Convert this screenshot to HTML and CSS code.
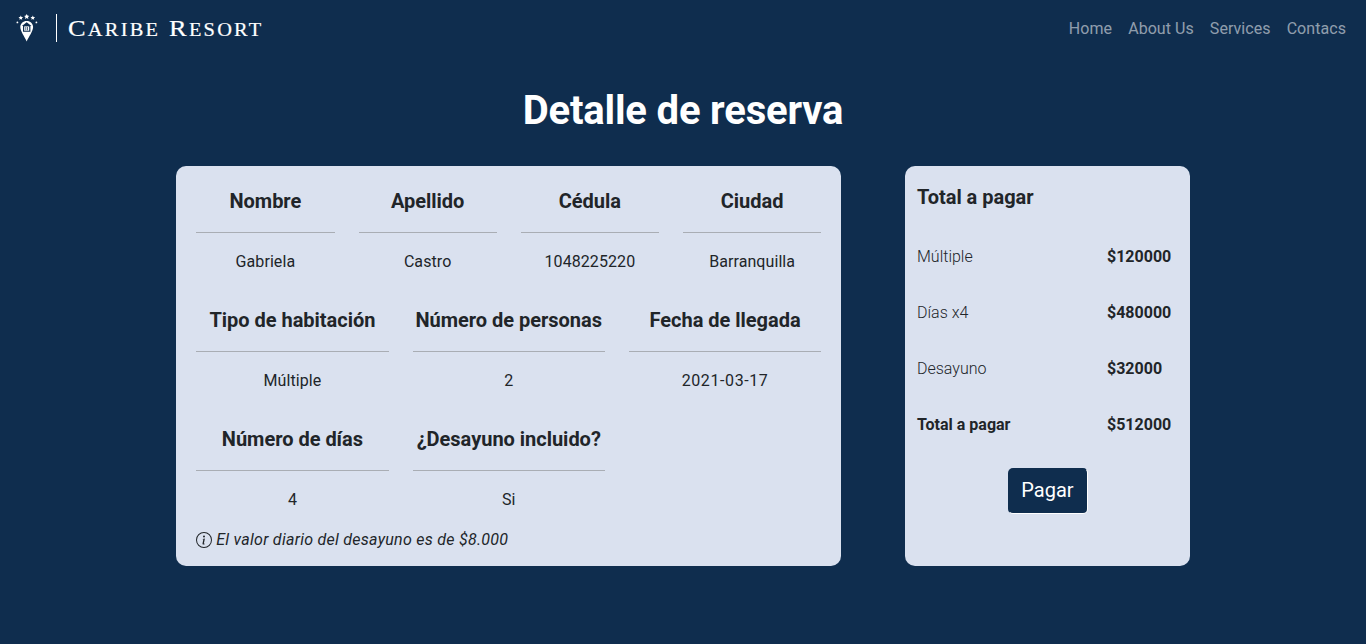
FILE: index.html
```html
<!DOCTYPE html>
<html lang="es">

<head>
    <meta charset="UTF-8">
    <meta name="viewport" content="width=device-width, initial-scale=1.0">
    <title>Detalle de reserva - Caribe Resort</title>
    <link rel="stylesheet" href="styles.css">
</head>

<body>
    <nav class="navbar">
        <a class="brand" href="#">
            <svg class="brand-icon" width="22" height="28" viewBox="0 0 22 28">
                <!-- stars -->
                <path d="M10.700 0l.8 1.600 1.800.3-1.300 1.200.3 1.800-1.600-.8-1.600.8.3-1.800-1.300-1.200 1.800-.3z" fill="#fff"/>
                <path d="M4.800 1.500l.7 1.400 1.600.2-1.200 1.100.3 1.600-1.400-.7-1.400.7.3-1.600-1.200-1.100 1.600-.2z" fill="#fff"/>
                <path d="M16.800 1.500l.7 1.400 1.600.2-1.200 1.100.3 1.600-1.400-.7-1.400.7.3-1.600-1.200-1.100 1.600-.2z" fill="#fff"/>
                <circle cx="1.400" cy="8.400" r="0.900" fill="#fff"/>
                <circle cx="20.400" cy="8.400" r="0.900" fill="#fff"/>
                <!-- pin with house -->
                <path d="M10.700 7c-3.700 0-6.400 2.700-6.400 6.100 0 4.200 4.200 9.500 6.400 14.400 2.200-4.900 6.400-10.200 6.400-14.400 0-3.400-2.700-6.100-6.400-6.100z" fill="#fff"/>
                <path d="M10.700 8.300l-4.800 3.700h1.100v5.800h7.400v-5.800h1.100z" fill="#0f2d4e"/>
                <path d="M8.200 12.400h5v4.300h-5z" fill="#fff"/>
                <path d="M9.500 13h.7v3.300h-.7zM11.200 13h.7v3.300h-.7z" fill="#0f2d4e"/>
            </svg>
            <span class="brand-name">
                <span class="brand-text">C<span class="brand-small">aribe</span> R<span class="brand-small">esort</span></span>
            </span>
        </a>
        <ul class="nav-links">
            <li><a href="#">Home</a></li>
            <li><a href="#">About Us</a></li>
            <li><a href="#">Services</a></li>
            <li><a href="#">Contacs</a></li>
        </ul>
    </nav>

    <h1 class="page-title">Detalle de reserva</h1>

    <main class="content">
        <section class="card details">
            <div class="fields fields-4">
                <div class="field">
                    <h5>Nombre</h5>
                    <hr>
                    <p>Gabriela</p>
                </div>
                <div class="field">
                    <h5>Apellido</h5>
                    <hr>
                    <p>Castro</p>
                </div>
                <div class="field">
                    <h5>Cédula</h5>
                    <hr>
                    <p>1048225220</p>
                </div>
                <div class="field">
                    <h5>Ciudad</h5>
                    <hr>
                    <p>Barranquilla</p>
                </div>
            </div>
            <div class="fields fields-3">
                <div class="field">
                    <h5>Tipo de habitación</h5>
                    <hr>
                    <p>Múltiple</p>
                </div>
                <div class="field">
                    <h5>Número de personas</h5>
                    <hr>
                    <p>2</p>
                </div>
                <div class="field">
                    <h5>Fecha de llegada</h5>
                    <hr>
                    <p class="date">2021-03-17</p>
                </div>
            </div>
            <div class="fields fields-3">
                <div class="field">
                    <h5>Número de días</h5>
                    <hr>
                    <p>4</p>
                </div>
                <div class="field">
                    <h5>¿Desayuno incluido?</h5>
                    <hr>
                    <p>Si</p>
                </div>
            </div>
            <p class="note">
                <svg width="16" height="16" viewBox="0 0 16 16" fill="currentColor">
                    <path d="M8 15A7 7 0 1 1 8 1a7 7 0 0 1 0 14zm0 1A8 8 0 1 0 8 0a8 8 0 0 0 0 16z"/>
                    <path d="M8.930 6.588l-2.290.287-.082.380.450.083c.294.070.352.176.288.469l-.738 3.468c-.194.897.105 1.319.808 1.319.545 0 1.178-.252 1.465-.598l.088-.416c-.200.176-.492.246-.686.246-.275 0-.375-.193-.304-.533L8.930 6.588zM9 4.500a1 1 0 1 1-2 0 1 1 0 0 1 2 0z"/>
                </svg>
                <em>El valor diario del desayuno es de $8.000</em>
            </p>
        </section>

        <aside class="card summary">
            <h5>Total a pagar</h5>
            <div class="summary-row">
                <span>Múltiple</span>
                <strong>$120000</strong>
            </div>
            <div class="summary-row">
                <span>Días x4</span>
                <strong>$480000</strong>
            </div>
            <div class="summary-row">
                <span>Desayuno</span>
                <strong>$32000</strong>
            </div>
            <div class="summary-row summary-total">
                <span>Total a pagar</span>
                <strong>$512000</strong>
            </div>
            <div class="summary-action">
                <button type="button" class="pay-btn">Pagar</button>
            </div>
        </aside>
    </main>
</body>

</html>
```

FILE: styles.css
```css
* {
    box-sizing: border-box;
}

body {
    margin: 0;
    min-height: 100vh;
    background: #0f2d4e;
    color: #212529;
    font-family: Roboto, sans-serif;
    font-size: 16px;
    line-height: 24px;
}

a {
    text-decoration: none;
}

/* Top bar */
.navbar {
    display: flex;
    justify-content: space-between;
    align-items: center;
    height: 56px;
    padding: 0 20px 0 16px;
}

.brand {
    display: flex;
    align-items: center;
    color: white;
}

.brand-icon {
    display: block;
}

.brand-name {
    margin-left: 18px;
    padding-left: 11px;
    border-left: 1px solid white;
    height: 28px;
    white-space: nowrap;
}

.brand-text {
    display: inline-block;
    font-family: "Liberation Serif", serif;
    font-size: 24px;
    line-height: 28px;
    letter-spacing: 2.050px;
    -webkit-text-stroke: 0.2px white;
    transform: scaleX(1.1);
    transform-origin: left center;
}

.brand-small {
    font-size: 18.500px;
    text-transform: uppercase;
}

.nav-links {
    display: flex;
    gap: 16px;
    margin: 0;
    padding: 2px 0 0;
    list-style: none;
    letter-spacing: 0.060px;
}

.nav-links a {
    color: rgba(255, 255, 255, 0.55);
}

.page-title {
    margin: 31px 0 31px;
    color: white;
    font-size: 40px;
    font-weight: 700;
    line-height: 48px;
    letter-spacing: -0.170px;
    text-align: center;
}

/* Cards */
.content {
    display: flex;
    gap: 64px;
    margin-left: 176px;
}

.card {
    height: 400px;
    background: #dae1ef;
    border-radius: 10px;
}

.details {
    width: 665px;
    padding: 23px 19.750px 0 20.250px;
}

.fields {
    display: grid;
    column-gap: 24px;
    margin-bottom: 34px;
}

.fields-4 {
    grid-template-columns: repeat(4, 1fr);
}

.fields-3 {
    grid-template-columns: repeat(3, 1fr);
}

.fields:nth-child(3) {
    margin-bottom: 16px;
}

.field {
    text-align: center;
}

h5 {
    margin: 0;
    font-size: 20px;
    font-weight: 700;
    line-height: 24px;
    letter-spacing: -0.020px;
    color: #212529;
}

.field hr {
    height: 1px;
    margin: 19px 0 17px;
    border: 0;
    background: #a9adb4;
}

.field p {
    margin: 0;
    letter-spacing: 0.080px;
}

.field .date {
    letter-spacing: 0.600px;
}

.note {
    display: flex;
    align-items: center;
    gap: 4px;
    margin: 0;
    letter-spacing: 0.270px;
}

/* Summary */
.summary {
    width: 285px;
    padding: 19px 12px 0;
}

.summary-row {
    display: grid;
    grid-template-columns: 190px 1fr;
    height: 24px;
    margin-top: 32px;
    font-weight: 300;
}

.summary-row:first-of-type {
    margin-top: 36px;
}

.summary-row strong {
    font-weight: 700;
}

.summary-total span {
    font-weight: 700;
}

.summary-action {
    display: flex;
    justify-content: center;
    margin-top: 31px;
}

.pay-btn {
    width: 80px;
    height: 46px;
    padding: 0 0 2px;
    border: 1px solid transparent;
    border-bottom-color: white;
    border-right-color: white;
    border-radius: 5px;
    background: #0f2d4e;
    color: white;
    font-family: Roboto, sans-serif;
    font-size: 20px;
    cursor: pointer;
}
```
